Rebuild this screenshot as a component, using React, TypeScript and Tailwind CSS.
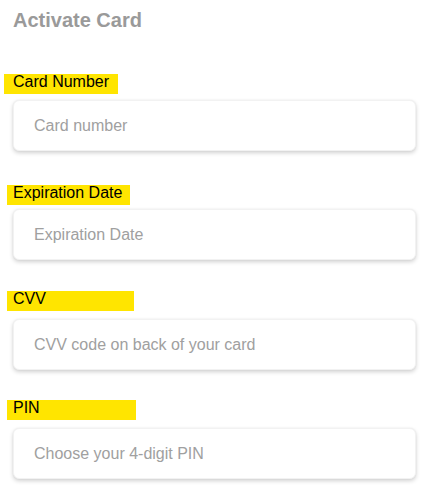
const fields = [
  { label: "Card Number", placeholder: "Card number", wrap: "mt-[42px] mb-[6px] ml-[-9px] pl-[9px] w-[114px]" },
  { label: "Expiration Date", placeholder: "Expiration Date", wrap: "mt-[34px] mb-[4px] ml-[-6px] pl-[6px] w-[123px]" },
  { label: "CVV", placeholder: "CVV code on back of your card", wrap: "mt-[31px] mb-[8px] ml-[-6px] pl-[6px] w-[127px]" },
  { label: "PIN", placeholder: "Choose your 4-digit PIN", wrap: "mt-[30px] mb-[8px] ml-[-6px] pl-[6px] w-[129px]" },
];

const App: React.FC = () => {
  return (
    <div className="min-h-[496px] bg-white pl-[13px] pr-[16px] pt-[8px] font-['Liberation_Sans',Arial,sans-serif]">
      <h1 className="text-[20px] leading-[24px] font-bold text-[#9a9a9a]">Activate Card</h1>

      {fields.map((f) => (
        <div key={f.label}>
          <label className={`block h-[20px] bg-[#ffe500] text-[16px] leading-[15px] text-black ${f.wrap}`}>
            {f.label}
          </label>
          <input
            type="text"
            placeholder={f.placeholder}
            className="block w-full h-[51px] rounded-[6px] border border-[#f2f2f2] bg-white pl-[20px] text-[16px] text-black placeholder:text-[#a0a0a0] outline-none shadow-[0_2px_4px_rgba(0,0,0,0.18),0_0_2px_rgba(0,0,0,0.06)]"
          />
        </div>
      ))}
    </div>
  );
};

export default App;
